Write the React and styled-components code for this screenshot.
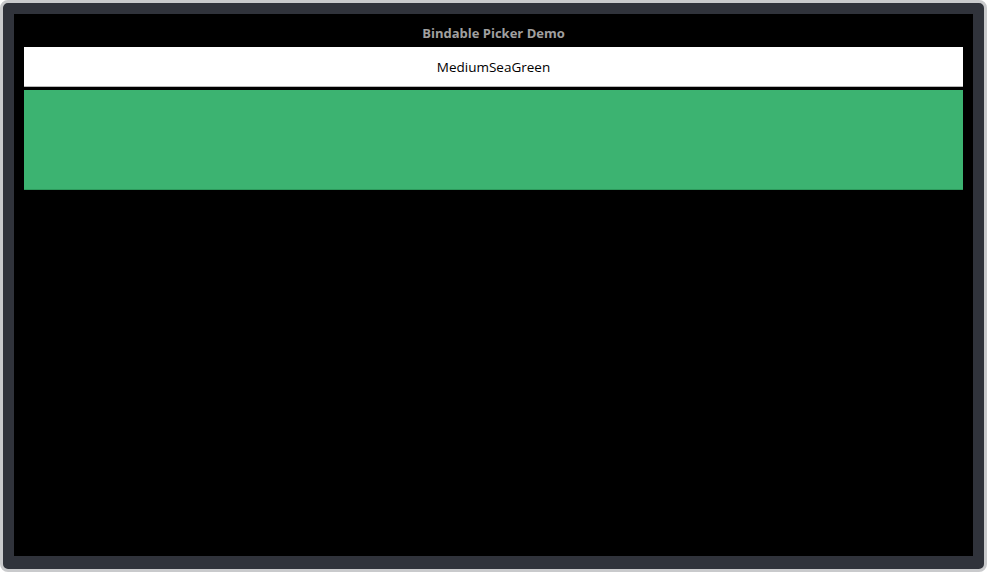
import React from "react";
import styled, { createGlobalStyle } from "styled-components";

const GlobalStyle = createGlobalStyle`
  html, body {
    margin: 0;
    padding: 0;
    background: #ffffff;
  }
  * {
    box-sizing: border-box;
  }
`;

const Device = styled.div`
  width: 987px;
  height: 572px;
  border: 3px solid #c9cacc;
  border-radius: 8px;
  background: #30333b;
  padding: 11px 11px 13px 11px;
  display: flex;
`;

const Screen = styled.div`
  flex: 1;
  background: #000000;
  display: flex;
  flex-direction: column;
  padding: 0 10px;
  font-family: "Open Sans", "Noto Sans", sans-serif;
`;

const Title = styled.div`
  height: 33px;
  padding-top: 4px;
  display: flex;
  align-items: center;
  justify-content: center;
  color: #a0a0a0;
  font-size: 13px;
  font-weight: 700;
`;

const Picker = styled.div`
  height: 40px;
  background: #ffffff;
  border-bottom: 1px solid #b8b8b8;
  display: flex;
  align-items: center;
  justify-content: center;
  color: #000000;
  font-size: 13.5px;
`;

const Swatch = styled.div`
  margin-top: 3px;
  height: 100px;
  background: ${(p) => p.color};
  border-bottom: 1px solid #2e9a5c;
`;

export default function App() {
  const selected = "MediumSeaGreen";
  return (
    <>
      <GlobalStyle />
      <Device>
        <Screen>
          <Title>Bindable Picker Demo</Title>
          <Picker>{selected}</Picker>
          <Swatch color="#3cb371" />
        </Screen>
      </Device>
    </>
  );
}
